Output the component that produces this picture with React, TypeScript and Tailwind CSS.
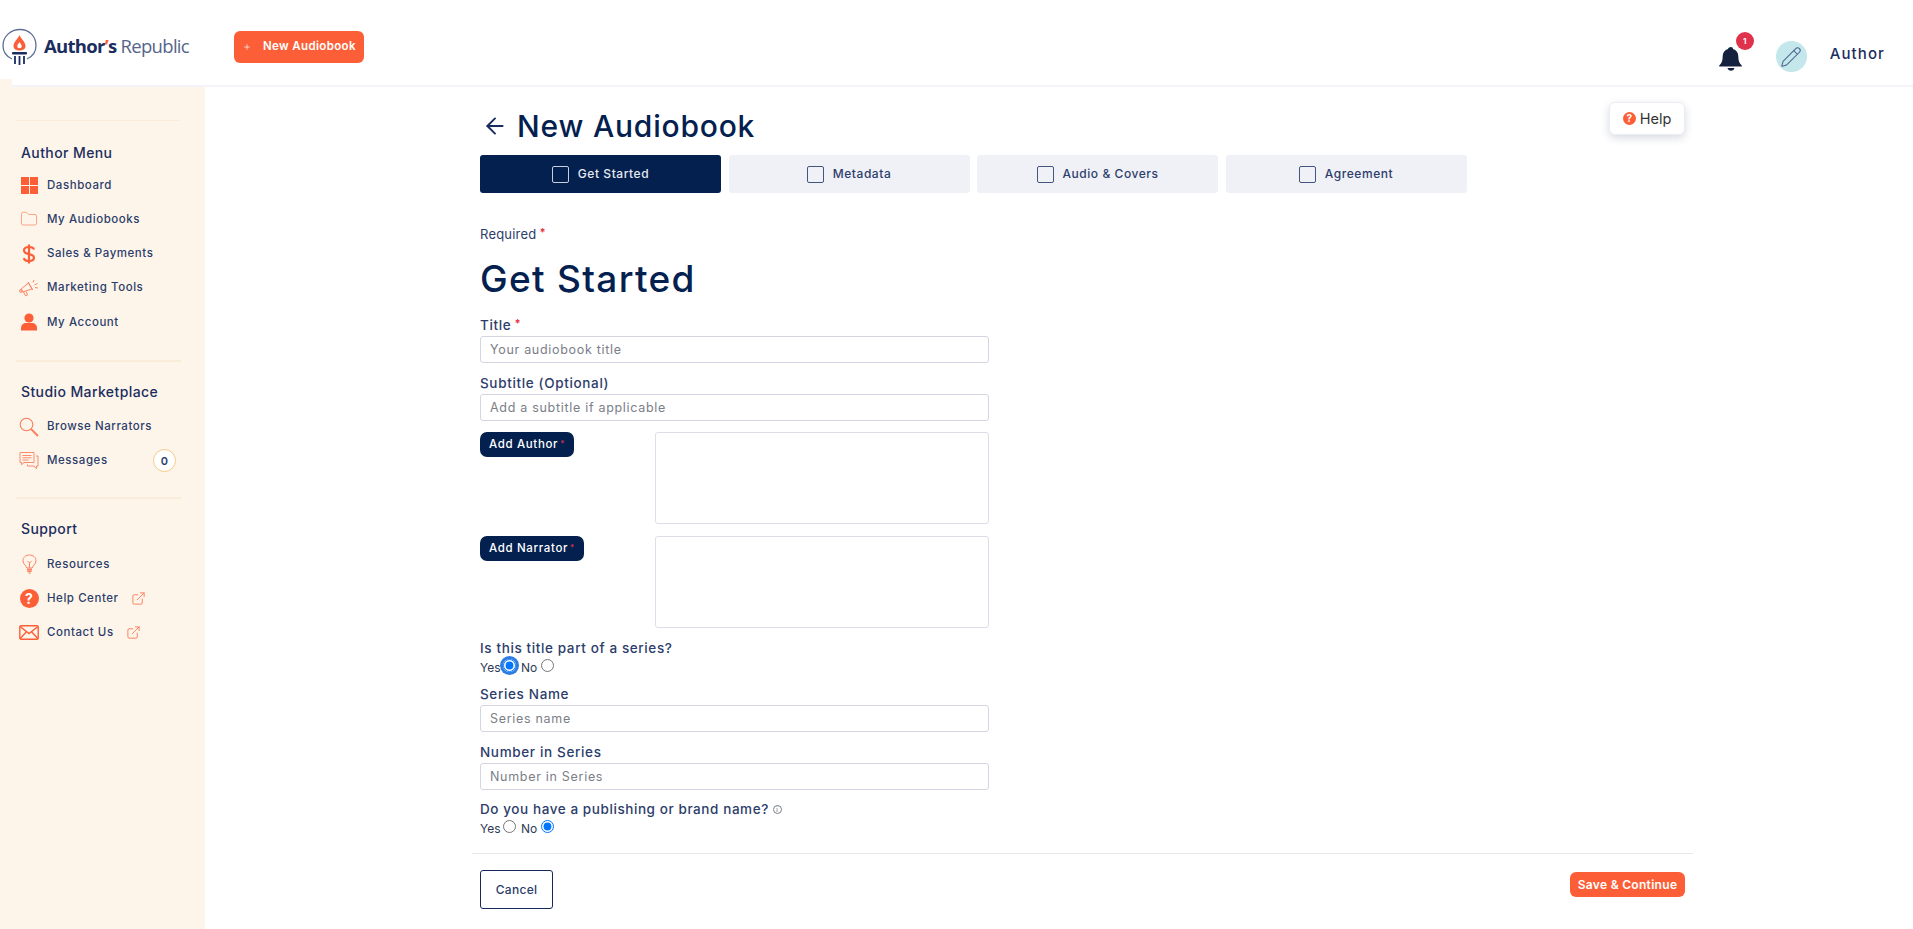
import React from 'react';
import { ArrowLeft, ExternalLink, Folder, Pencil, Plus } from 'lucide-react';

const FONT = "font-['Inter','Noto_Sans',sans-serif]";

const DashboardIcon = () => (
    <svg width="17" height="17" viewBox="0 0 17 17" fill="#fc5f38">
        <rect x="0" y="0" width="8" height="8" />
        <rect x="9" y="0" width="8" height="8" />
        <rect x="0" y="9" width="8" height="8" />
        <rect x="9" y="9" width="8" height="8" />
    </svg>
);

const UserIcon = () => (
    <svg width="18" height="18" viewBox="0 0 18 18" fill="#fc5f38">
        <circle cx="9" cy="5" r="4.6" />
        <path d="M1 17.5v-2.5c0-3 2.4-5 5-5h6c2.600 0 5 2 5 5v2.500z" />
    </svg>
);

const DollarIcon = () => (
    <svg width="14" height="20" viewBox="0 0 14 20" fill="none" stroke="#fc5f38" strokeWidth="2.200">
        <path d="M7 0.500v19" />
        <path d="M12 5.500C11.500 3.800 9.500 3 7 3 4 3 2 4.300 2 6.400c0 5 10 2.400 10 7.200 0 2.100-2 3.400-5 3.400-2.800 0-4.700-1-5.200-2.900" />
    </svg>
);

const MegaphoneIcon = () => (
    <svg width="20" height="19" viewBox="0 0 20 19" fill="none" stroke="#fc5f38" strokeWidth="1" opacity="0.75">
        <path d="M1.500 10.500l8-6.500 3.500 6-9.500 3z" />
        <path d="M9 3l4.800 8" />
        <path d="M4.500 13l2 3.800 2-.8-1.500-3.600" />
        <circle cx="2" cy="12" r="1.400" />
        <path d="M14 3.500l1-2.500M15.500 6l3-1.500M16 8.500l3 .5" />
    </svg>
);

const SearchIcon = () => (
    <svg width="20" height="20" viewBox="0 0 20 20" fill="none" stroke="#fc5f38" opacity="0.8">
        <circle cx="7.500" cy="7.500" r="6.300" strokeWidth="1.100" />
        <path d="M12 12l7 7" strokeWidth="1.800" />
    </svg>
);

const MessagesIcon = () => (
    <svg width="20" height="19" viewBox="0 0 20 19" fill="none" stroke="#fc5f38" strokeWidth="1" opacity="0.7">
        <path d="M1 1.500h14v10H5l-2.500 2.200V11.500H1z" />
        <path d="M3.500 4.500h9M3.500 6.800h9M3.500 9h6" />
        <path d="M17 5h2v10h-1.500v2.800L15 15H8.500v-1.500" />
    </svg>
);

const BulbIcon = () => (
    <svg width="15" height="20" viewBox="0 0 15 20" fill="none" stroke="#fc5f38" strokeWidth="1" opacity="0.75">
        <path d="M4.800 14C4.500 11.500 1 10.500 1 6.800 1 3.300 3.900 1 7.500 1S14 3.300 14 6.800c0 3.700-3.500 4.700-3.800 7.200z" />
        <path d="M5.500 7l2 2 2-2M7.500 9v5" />
        <path d="M5 15.500h5M5.300 17.300h4.400" strokeWidth="1.500" />
        <path d="M6.500 19h2" strokeWidth="1.300" />
    </svg>
);

const MailIcon = () => (
    <svg width="20" height="15" viewBox="0 0 20 15" fill="none" stroke="#fc5f38" strokeWidth="1.400">
        <rect x="0.800" y="0.800" width="18.400" height="13.400" rx="1.200" />
        <path d="M1 1.500l9 7 9-7M1 13.800l6.500-7M19 13.800l-6.500-7" />
    </svg>
);

const HelpDot = ({ size, text }: { size: number; text: string }) => (
    <span
        className="flex items-center justify-center rounded-full bg-[#fc5f38] font-bold text-white"
        style={{ width: size, height: size, fontSize: text === 'lg' ? 14 : 10 }}
    >
        ?
    </span>
);

const Logo = () => (
    <div className="flex items-center gap-[6px] pl-[2px] pt-[2px]">
        <svg width="36" height="38" viewBox="0 0 36 38" fill="none">
            <path d="M10 31C4.500 28.500 1 23.500 1 17.500 1 8.500 8.500 1.500 18 1.500S34 8.500 34 17.500c0 6-3.500 11-9 13.500" stroke="#5f6f94" strokeWidth="1.300" />
            <path d="M17.500 7c1 3.500 6 6.500 6 11 0 3-2.500 4.500-6 4.500s-6-1.500-6-4.500c0-4.500 5-7.500 6-11z" fill="#fc5f38" />
            <path d="M17.500 14c.6 1.500 2.200 2.500 2.200 4.300 0 1.200-1 1.900-2.200 1.900s-2.200-.7-2.200-1.900c0-1.800 1.600-2.800 2.200-4.300z" fill="#fff" />
            <rect x="10" y="24" width="15" height="2.500" rx="1" fill="#1b2d5e" />
            <path d="M13 28v8M17.500 28v9M22 28v8" stroke="#1b2d5e" strokeWidth="1.800" />
        </svg>
        <span className="whitespace-nowrap font-['Open_Sans',sans-serif] text-[18.5px] leading-none tracking-[-0.7px] text-[#1b2d5e]">
            <span className="font-bold">Author</span>
            <span className="font-bold text-[#fc5f38]">’</span>
            <span className="font-bold">s</span>
            <span className="ml-[4px] font-normal text-[#56648a]">Republic</span>
        </span>
    </div>
);

const NavItem = ({ icon, label, extra }: { icon: React.ReactNode; label: string; extra?: React.ReactNode }) => (
    <div className="flex h-[34.3px] items-center">
        <span className="flex w-[26px] shrink-0 items-center justify-center">{icon}</span>
        <span className="ml-[5px] whitespace-nowrap text-[11.5px] font-medium tracking-[0.55px] text-[#2c3d6b]">{label}</span>
        {extra}
    </div>
);

const NavHeading = ({ children }: { children: React.ReactNode }) => (
    <div className="pl-[5px] text-[14px] font-medium leading-[20px] tracking-[0.4px] text-[#1b2d5e]">{children}</div>
);

const Sidebar = () => {
    const ext = <ExternalLink size={15} color="#fc5f38" strokeWidth={1.600} opacity={0.75} className="ml-[12px]" />;
    return (
        <aside className="relative w-[205px] shrink-0 bg-[#fdf5ea] pl-[16px] pt-[33px]">
            <div className="absolute -top-[8px] left-0 h-[8px] w-[12px] bg-[#fdf5ea]" />
            <div className="h-px w-[165px] bg-[#fbecd9]" />
            <div className="mt-[22px] w-[165px]">
                <NavHeading>Author Menu</NavHeading>
                <div className="mt-[5px]">
                    <NavItem icon={<DashboardIcon />} label="Dashboard" />
                    <NavItem icon={<Folder size={18} color="#fc5f38" strokeWidth={1.200} opacity={0.6} />} label="My Audiobooks" />
                    <NavItem icon={<DollarIcon />} label="Sales & Payments" />
                    <NavItem icon={<MegaphoneIcon />} label="Marketing Tools" />
                    <NavItem icon={<UserIcon />} label="My Account" />
                </div>
            </div>
            <div className="mt-[21px] h-[2px] w-[165px] bg-[#fbecd9]" />
            <div className="mt-[20px] w-[165px]">
                <NavHeading>Studio Marketplace</NavHeading>
                <div className="mt-[7px]">
                    <NavItem icon={<SearchIcon />} label="Browse Narrators" />
                    <NavItem
                        icon={<MessagesIcon />}
                        label="Messages"
                        extra={
                            <span className="ml-auto mr-[5px] flex h-[23px] w-[23px] items-center justify-center rounded-full border border-[#f8c987] bg-white text-[11px] font-semibold text-[#2c3d6b]">
                                0
                            </span>
                        }
                    />
                </div>
            </div>
            <div className="mt-[19px] h-[2px] w-[165px] bg-[#fbecd9]" />
            <div className="mt-[20px] w-[165px]">
                <NavHeading>Support</NavHeading>
                <div className="mt-[8px]">
                    <NavItem icon={<BulbIcon />} label="Resources" />
                    <NavItem icon={<HelpDot size={19} text="lg" />} label="Help Center" extra={ext} />
                    <NavItem icon={<MailIcon />} label="Contact Us" extra={ext} />
                </div>
            </div>
        </aside>
    );
};

const Header = () => (
    <header className="flex h-[87px] items-center border-b-2 border-[#f3f3f9] bg-white pt-[6px]">
        <div className="w-[234px] shrink-0">
            <Logo />
        </div>
        <button className="mt-[2px] flex h-[32px] w-[130px] items-center rounded-[6px] bg-[#fc5f38] pl-[7px] text-[11.5px] font-semibold tracking-[0.35px] text-white">
            <Plus size={8} strokeWidth={2} className="ml-[2px] mr-[12px]" />
            New Audiobook
        </button>
        <div className="ml-auto flex items-center pr-[28px] pt-[22px]">
            <div className="relative mr-[32px] mt-[5px]">
                <svg width="26" height="26" viewBox="0 0 26 26" fill="#14213f">
                    <path d="M13 1c1.200 0 2 .8 2 1.900 3.400.9 5.300 3.700 5.300 7.300 0 4.400 1 7 3.500 9.300v1H1.200v-1C3.700 17.200 4.700 14.600 4.700 10.200c0-3.600 1.900-6.400 5.300-7.300C10 1.800 11.800 1 13 1z" />
                    <path d="M9.500 22h7c-.4 1.700-1.800 2.800-3.500 2.800S9.900 23.700 9.500 22z" />
                </svg>
                <span className="absolute -right-[10px] -top-[14px] flex h-[18px] w-[18px] items-center justify-center rounded-full bg-[#e0324b] text-[8px] font-bold text-white">
                    1
                </span>
            </div>
            <div className="flex h-[31px] w-[31px] items-center justify-center rounded-full bg-[#c3e7ea]">
                <Pencil size={22} color="#4a6290" strokeWidth={1.100} />
            </div>
            <span className="-mt-[4px] ml-[23px] text-[15px] font-medium tracking-[1.1px] text-[#1b2d5e]">Author</span>
        </div>
    </header>
);

const Required = () => <span className="relative -top-[3px] ml-[3px] text-[11px] font-bold text-[#e0324b]">*</span>;

const TextField = ({ label, placeholder, required, className }: { label: string; placeholder: string; required?: boolean; className?: string }) => (
    <div className={className}>
        <label className="block h-[19px] text-[13.5px] font-medium leading-[19px] tracking-[0.65px] text-[#2c3d6b]">
            {label}
            {required && <Required />}
        </label>
        <input
            placeholder={placeholder}
            className="mt-[1px] block h-[27px] w-full rounded-[3px] border border-[#d3d6e2] bg-white px-[9px] text-[12.5px] tracking-[0.7px] outline-none placeholder:text-[#7b7e87]"
        />
    </div>
);

const AddRow = ({ label, w, className }: { label: string; w: string; className?: string }) => (
    <div className={`flex items-start justify-between ${className ?? ''}`}>
        <button className={`flex h-[25px] items-center rounded-[7px] bg-[#03204f] pl-[9px] text-[11.5px] font-medium tracking-[0.65px] text-white ${w}`}>
            {label}
            <span className="relative -top-[2px] ml-[2px] text-[8px] text-[#e0324b]">*</span>
        </button>
        <textarea className="h-[92px] w-[334px] resize-none rounded-[3px] border border-[#dcdfe9] bg-white outline-none" />
    </div>
);

const RadioRow = ({ first, focused }: { first: boolean; focused?: boolean }) => (
    <div className="flex h-[19px] items-center text-[12px] text-[#2f3a55]">
        <span className="w-[23px]">Yes</span>
        <span className={`-mt-[4px] flex h-[13px] w-[13px] rounded-full ${focused ? 'ring-[3px] ring-[#2f7de1]' : ''}`}>
            <input type="radio" name={focused ? 'series' : 'brand'} defaultChecked={first} className="m-0 h-[13px] w-[13px] outline-none" />
        </span>
        <span className="ml-[5px] w-[19px]">No</span>
        <input type="radio" name={focused ? 'series' : 'brand'} defaultChecked={!first} className="m-0 -mt-[4px] ml-[1px] h-[13px] w-[13px]" />
    </div>
);

const StepTab = ({ label, active }: { label: string; active?: boolean }) => (
    <div
        className={`flex h-[38px] w-[241px] items-center justify-center gap-[9px] rounded-[3px] text-[12px] font-medium tracking-[0.55px] ${
            active ? 'bg-[#03204f] text-[#e6e9f0]' : 'bg-[#f0f1f6] text-[#2c3d6b]'
        }`}
    >
        <span className={`h-[17px] w-[17px] rounded-[2px] border-[1.5px] ${active ? 'border-[#c9cedb]' : 'border-[#43557f]'}`} />
        {label}
    </div>
);

const Main = () => (
    <main className="relative flex-1 bg-white pt-[17px]">
        <div className="absolute right-[228px] top-[15px] flex h-[33px] w-[76px] items-center justify-center gap-[4px] rounded-[6px] border border-[#eceef5] bg-white text-[14.5px] text-[#333] shadow-[0_3px_8px_rgba(40,50,90,0.18)]">
            <HelpDot size={13} text="sm" />
            Help
        </div>
        <div className="pl-[275px] pr-[220px]">
            <div className="flex h-[44px] items-center">
                <ArrowLeft size={26} color="#1b2d5e" strokeWidth={1.800} className="ml-[2px]" />
                <h1 className="ml-[9px] text-[30px] font-medium tracking-[0.8px] text-[#03204f]">New Audiobook</h1>
            </div>
            <div className="mt-[7px] flex gap-[7.5px]">
                <StepTab label="Get Started" active />
                <StepTab label="Metadata" />
                <StepTab label="Audio & Covers" />
                <StepTab label="Agreement" />
            </div>
            <div className="mt-[32px] text-[13px] leading-[18px] tracking-[0.2px] text-[#2c3d6b]">
                Required
                <Required />
            </div>
            <h2 className="mt-[13px] text-[37px] font-medium leading-[44px] tracking-[1.3px] text-[#03204f]">Get Started</h2>
            <div className="w-[509px]">
                <TextField className="mt-[15px]" label="Title" placeholder="Your audiobook title" required />
                <TextField className="mt-[11px]" label="Subtitle (Optional)" placeholder="Add a subtitle if applicable" />
                <AddRow className="mt-[11px]" label="Add Author" w="w-[94px]" />
                <AddRow className="mt-[12px]" label="Add Narrator" w="w-[104px]" />
                <div className="mt-[11px] h-[19px] text-[13.5px] font-medium leading-[19px] tracking-[0.62px] text-[#2c3d6b]">Is this title part of a series?</div>
                <RadioRow first focused />
                <TextField className="mt-[8px]" label="Series Name" placeholder="Series name" />
                <TextField className="mt-[11px]" label="Number in Series" placeholder="Number in Series" />
                <div className="mt-[10px] flex h-[19px] items-center whitespace-nowrap text-[13.5px] font-medium tracking-[0.58px] text-[#2c3d6b]">
                    Do you have a publishing or brand name?
                    <span className="ml-[4px] flex h-[9px] w-[9px] items-center justify-center rounded-full border border-[#7b7e87] text-[6px] leading-none text-[#7b7e87]">i</span>
                </div>
                <RadioRow first={false} />
            </div>
            <div className="-ml-[8px] mt-[15px] h-[1px] bg-[#e8e8ec]" />
            <div className="mt-[16px] flex items-start justify-between">
                <button className="h-[39px] w-[73px] rounded-[3px] border border-[#14295a] text-[12px] font-medium tracking-[0.3px] text-[#2c3d6b]">Cancel</button>
                <button className="mr-[8px] mt-[2px] h-[25px] w-[115px] rounded-[6px] bg-[#fc5f38] text-[12px] font-semibold tracking-[0.3px] text-white">Save &amp; Continue</button>
            </div>
        </div>
    </main>
);

const App: React.FC = () => (
    <div className={`flex h-[929px] flex-col overflow-hidden bg-white ${FONT}`}>
        <Header />
        <div className="flex flex-1">
            <Sidebar />
            <Main />
        </div>
    </div>
);

export default App;
